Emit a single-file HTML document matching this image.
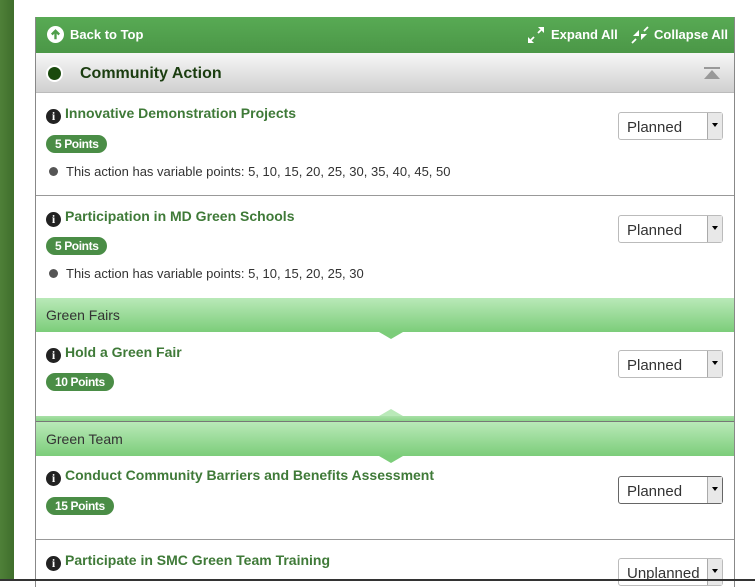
<!DOCTYPE html>
<html><head><meta charset="utf-8"><style>
*{margin:0;padding:0;box-sizing:border-box}
body{width:755px;height:581px;overflow:hidden;background:#fff;font-family:"Liberation Sans",Arial,sans-serif;position:relative}
.abs{position:absolute}
.lbar{left:0;top:0;width:14px;height:581px;background:linear-gradient(90deg,#4f8038,#3f6e2c)}
.panel{left:35px;top:17px;width:700px;height:570px;border-left:1px solid #888;border-right:1px solid #888}
.hdr{left:36px;top:17px;width:698px;height:36px;background:linear-gradient(#58aa54,#4b9747);color:#fff;font-weight:bold;font-size:13px}
.ca{left:36px;top:53px;width:698px;height:40px;background:linear-gradient(#f7f7f7,#d0d0d0);border-bottom:1px solid #bbb}
.title{font-weight:bold;font-size:14px;color:#3f7a38;white-space:nowrap}
.info{display:inline-block;width:15px;height:15px;border-radius:50%;background:#222;color:#fff;font:bold 12px "Liberation Serif",serif;text-align:center;line-height:15px;vertical-align:-2px;margin-right:4px}
.badge{height:18px;border-radius:9px;background:#4a8d46;color:#fff;font-weight:bold;font-size:12px;line-height:18px;padding:0 9px;letter-spacing:-.4px}
.bul{font-size:13px;color:#333;white-space:nowrap;letter-spacing:0}
.bul i{display:inline-block;width:9px;height:9px;border-radius:50%;background:#555;margin-right:8px;vertical-align:0}
.sel{width:105px;height:28px;border:1px solid #bbb;border-radius:3px;background:#fff;font-size:15px;color:#333;padding:6px 0 0 8px}
.sel:after{content:"";position:absolute;right:0;top:0;width:14px;height:26px;background:#e8e8e8;border-left:1px solid #aaa}
.sel b{position:absolute;right:4px;top:10px;z-index:2;border:3px solid transparent;border-top:4px solid #000;border-bottom:0}
.hr{left:36px;width:698px;height:1px;background:#999}
.band{left:36px;width:698px;height:34px;background:linear-gradient(#b9e9b8,#7ccd7a);font-size:14px;color:#333;padding:9px 0 0 10px}
.tri{width:0;height:0;border-left:12px solid transparent;border-right:12px solid transparent}
</style></head><body>
<div class="abs lbar"></div>
<div class="abs panel"></div>
<div class="abs hdr">
 <svg class="abs" style="left:11px;top:9px" width="17" height="17" viewBox="0 0 16 16"><circle cx="8" cy="8" r="8" fill="#fff"/><path d="M8 12.5V4.5M4.5 8L8 4.5 11.5 8" stroke="#4f9e4b" stroke-width="2.2" fill="none"/></svg>
 <span class="abs" style="left:34px;top:10px">Back to Top</span>
 <svg class="abs" style="left:491px;top:9px" width="18" height="18" viewBox="0 0 18 18" stroke="#fff" stroke-width="1.8" fill="#fff"><path d="M4 14L7 11M11 7L14 4" fill="none"/><path d="M1 17V11L7 17Z" stroke="none"/><path d="M17 1V7L11 1Z" stroke="none"/></svg>
 <span class="abs" style="left:515px;top:10px">Expand All</span>
 <svg class="abs" style="left:595px;top:9px" width="18" height="18" viewBox="0 0 18 18" stroke="#fff" stroke-width="1.8" fill="#fff"><path d="M1 17L5 13M17 1L13 5" fill="none"/><path d="M8 10V4L2 10Z" stroke="none"/><path d="M10 8V14L16 8Z" stroke="none"/></svg>
 <span class="abs" style="left:618px;top:10px">Collapse All</span>
</div>
<div class="abs ca">
 <div class="abs" style="left:10px;top:12px;width:17px;height:17px;border-radius:50%;background:#fff"></div>
 <div class="abs" style="left:12px;top:14px;width:13px;height:13px;border-radius:50%;background:#1a4a0d"></div>
 <span class="abs" style="left:44px;top:12px;font-weight:bold;font-size:16px;color:#1b3d10">Community Action</span>
 <div class="abs" style="left:668px;top:14px;width:16px;height:2px;background:#999"></div>
 <div class="abs tri" style="left:668px;top:17px;border-left-width:8px;border-right-width:8px;border-bottom:9px solid #999"></div>
</div>

<div class="abs title" style="left:46px;top:105px"><span class="info">i</span>Innovative Demonstration Projects</div>
<div class="abs badge" style="left:46px;top:135px">5 Points</div>
<div class="abs bul" style="left:49px;top:164px"><i></i>This action has variable points: 5, 10, 15, 20, 25, 30, 35, 40, 45, 50</div>
<div class="abs sel" style="left:618px;top:112px">Planned<b></b></div>
<div class="abs hr" style="top:195px"></div>

<div class="abs title" style="left:46px;top:208px"><span class="info">i</span>Participation in MD Green Schools</div>
<div class="abs badge" style="left:46px;top:237px">5 Points</div>
<div class="abs bul" style="left:49px;top:266px"><i></i>This action has variable points: 5, 10, 15, 20, 25, 30</div>
<div class="abs sel" style="left:618px;top:215px">Planned<b></b></div>

<div class="abs band" style="top:298px">Green Fairs</div>
<div class="abs tri" style="left:379px;top:332px;border-top:7px solid #7ccd7a"></div>
<div class="abs title" style="left:46px;top:344px"><span class="info">i</span>Hold a Green Fair</div>
<div class="abs badge" style="left:46px;top:373px">10 Points</div>
<div class="abs sel" style="left:618px;top:350px">Planned<b></b></div>
<div class="abs tri" style="left:379px;top:409px;border-bottom:7px solid #b9e9b8"></div>
<div class="abs" style="left:36px;top:416px;width:698px;height:5px;background:linear-gradient(#a9e0a8,#8ad588)"></div>
<div class="abs hr" style="top:421px;background:#777"></div>
<div class="abs band" style="top:422px">Green Team</div>
<div class="abs tri" style="left:379px;top:456px;border-top:7px solid #7ccd7a"></div>
<div class="abs title" style="left:46px;top:467px"><span class="info">i</span>Conduct Community Barriers and Benefits Assessment</div>
<div class="abs badge" style="left:46px;top:497px">15 Points</div>
<div class="abs sel" style="left:618px;top:476px;border-color:#666">Planned<b></b></div>
<div class="abs hr" style="top:539px"></div>
<div class="abs title" style="left:46px;top:552px"><span class="info">i</span>Participate in SMC Green Team Training</div>
<div class="abs sel" style="left:618px;top:558px">Unplanned<b></b></div>
<div class="abs" style="left:0;top:579px;width:755px;height:2px;background:#333"></div>
</body></html>
